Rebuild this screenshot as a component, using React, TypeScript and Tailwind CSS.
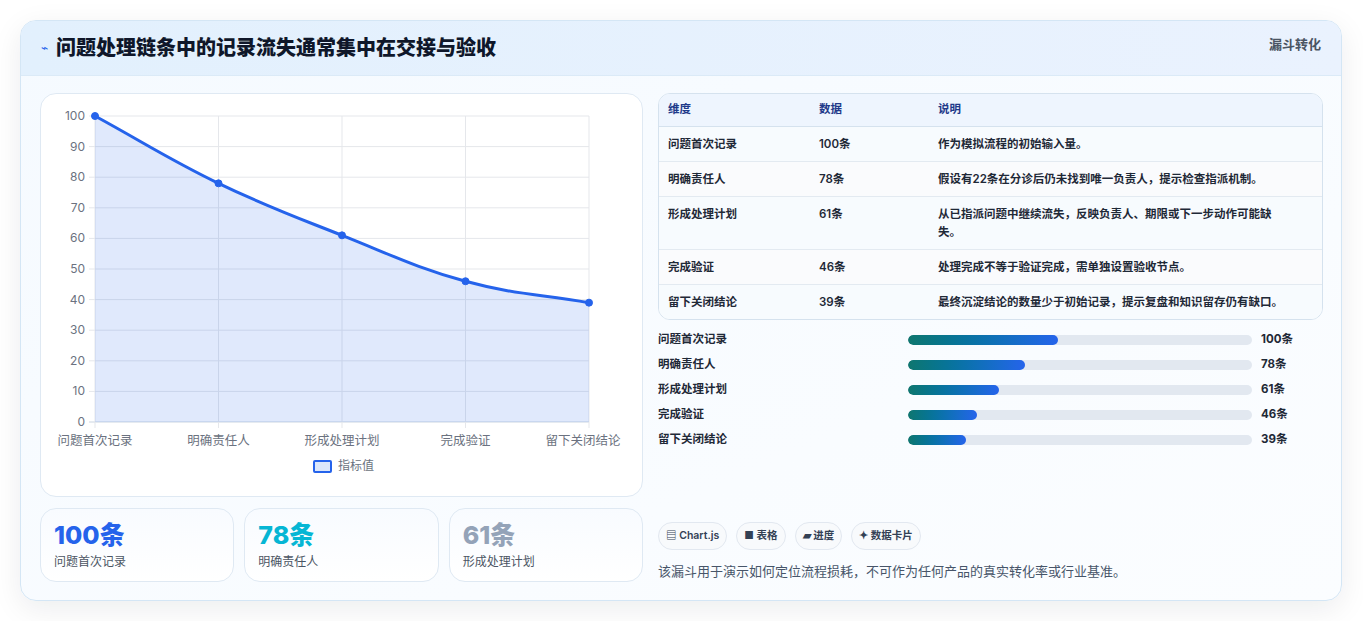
import React from 'react';

const rows = [
  { name: '问题首次记录', v: 100, desc: '作为模拟流程的初始输入量。' },
  { name: '明确责任人', v: 78, desc: '假设有22条在分诊后仍未找到唯一负责人，提示检查指派机制。' },
  { name: '形成处理计划', v: 61, desc: '从已指派问题中继续流失，反映负责人、期限或下一步动作可能缺失。' },
  { name: '完成验证', v: 46, desc: '处理完成不等于验证完成，需单独设置验收节点。' },
  { name: '留下关闭结论', v: 39, desc: '最终沉淀结论的数量少于初始记录，提示复盘和知识留存仍有缺口。' },
];

const barW: Record<number, number> = { 100: 150, 78: 117, 61: 91, 46: 69, 39: 58 };

function Chart() {
  const x0 = 54, x1 = 548, yTop = 22, yBot = 328;
  const xs = rows.map((_, i) => x0 + (i * (x1 - x0)) / 4);
  const ys = rows.map((r) => yBot - (r.v / 100) * (yBot - yTop));
  const pts = xs.map((x, i) => [x, ys[i]]);
  let d = `M${pts[0][0]},${pts[0][1]}`;
  for (let i = 1; i < pts.length; i++) {
    const [px, py] = pts[i - 1];
    const [cx, cy] = pts[i];
    const dx = (cx - px) * 0.4;
    const slopePrev = i > 1 ? (cy - pts[i - 2][1]) / 2 : cy - py;
    const slopeNext = i < pts.length - 1 ? (pts[i + 1][1] - py) / 2 : cy - py;
    d += ` C${px + dx},${py + slopePrev * 0.4} ${cx - dx},${cy - slopeNext * 0.4} ${cx},${cy}`;
  }
  const area = `${d} L${x1},${yBot} L${x0},${yBot} Z`;
  const ticks = [0, 10, 20, 30, 40, 50, 60, 70, 80, 90, 100];
  return (
    <svg width="600" height="356" className="block">
      {ticks.map((t) => {
        const y = yBot - (t / 100) * (yBot - yTop);
        return (
          <g key={t}>
            <line x1={x0 - 6} x2={x1} y1={y} y2={y} stroke={t === 0 ? '#cbd5e1' : '#e5e7eb'} />
            <text x={x0 - 10} y={y + 4} textAnchor="end" fontSize="12" fill="#6b7280">{t}</text>
          </g>
        );
      })}
      {xs.map((x, i) => (
        <g key={i}>
          <line x1={x} x2={x} y1={yTop} y2={yBot + 6} stroke="#e5e7eb" />
          <text x={i === 4 ? x - 6 : x} y={yBot + 23} textAnchor="middle" fontSize="12.5" fill="#6b7280">{rows[i].name}</text>
        </g>
      ))}
      <path d={area} fill="rgba(37,99,235,0.14)" />
      <path d={d} fill="none" stroke="#2563eb" strokeWidth="3" />
      {pts.map(([x, y], i) => (
        <circle key={i} cx={x} cy={y} r="3.5" fill="#2563eb" stroke="#2563eb" />
      ))}
    </svg>
  );
}

export default function App() {
  return (
    <div className="min-h-screen bg-white p-5 pr-[21px]" style={{ fontFamily: 'Inter, "Noto Sans CJK SC", sans-serif' }}>
      <div className="rounded-2xl border border-[#d4e6f5] bg-gradient-to-br from-[#f5faff] to-[#fbfdff] shadow-[0_8px_30px_rgba(15,23,42,0.08)] overflow-hidden">
        <div className="h-[55px] flex items-center justify-between pl-5 pr-5 bg-gradient-to-r from-[#e2f0fd] to-[#eaf2fe] border-b border-[#dbeaf7]">
          <div className="flex items-center gap-2">
            <span className="text-[#2563eb] text-xs">⌁</span>
            <span className="text-[20px] font-black text-[#0f172a]">问题处理链条中的记录流失通常集中在交接与验收</span>
          </div>
          <span className="text-[13px] font-bold text-[#4b5563] self-start mt-[14px]">漏斗转化</span>
        </div>
        <div className="flex gap-[15px] pl-[19px] pr-[18px] pt-[17px] pb-[18px]">
          <div className="w-[603px] flex flex-col gap-[11px]">
            <div className="h-[404px] rounded-2xl border border-[#dfe9f3] bg-white">
              <Chart />
              <div className="flex items-center justify-center gap-1.5 mt-[8px] ml-[4px]">
                <span className="w-[19px] h-[13px] border-2 border-[#2563eb] bg-[#dbe7fb] rounded-[2px]" />
                <span className="text-xs text-[#6b7280]">指标值</span>
              </div>
            </div>
            <div className="grid grid-cols-3 gap-[10px]">
              {[
                { v: '100条', l: '问题首次记录', c: 'text-[#2563eb]' },
                { v: '78条', l: '明确责任人', c: 'text-[#06b6d4]' },
                { v: '61条', l: '形成处理计划', c: 'text-[#94a3b8]' },
              ].map((s) => (
                <div key={s.l} className="h-[74px] rounded-2xl border border-[#dfe9f3] bg-gradient-to-b from-[#f8fbff] to-white px-[13px] pt-[11px]">
                  <div className={`text-[25px] leading-[30px] font-extrabold ${s.c}`}>{s.v}</div>
                  <div className="text-xs text-[#4b5563] mt-[4px]">{s.l}</div>
                </div>
              ))}
            </div>
          </div>
          <div className="flex-1 flex flex-col">
            <div className="rounded-xl border border-[#d5e2ee] overflow-hidden bg-white">
              <table className="w-full text-[11.5px] text-[#1f2937] font-semibold">
                <thead>
                  <tr className="bg-[#eef5fe] text-[#1e3a8a] h-[32px] border-b border-[#d5e2ee]">
                    <th className="text-left pl-[9px] w-[160px] font-semibold">维度</th>
                    <th className="text-left w-[119px] font-semibold">数据</th>
                    <th className="text-left font-semibold">说明</th>
                  </tr>
                </thead>
                <tbody>
                  {rows.map((r, i) => (
                    <tr key={r.name} className={`${i % 2 === 0 ? 'bg-[#f7fbfe]' : 'bg-[#fafbfd]'} ${i < 4 ? 'border-b border-[#e3eaf1]' : ''}`}>
                      <td className="pl-[9px] align-top py-[8px] leading-[18px]">{r.name}</td>
                      <td className="align-top py-[8px] leading-[18px]">{r.v}条</td>
                      <td className="align-top py-[8px] pr-[28px] leading-[18px]">{r.desc}</td>
                    </tr>
                  ))}
                </tbody>
              </table>
            </div>
            <div className="flex flex-col gap-[7px] mt-[11px]">
              {rows.map((r) => (
                <div key={r.name} className="flex items-center h-[18px] text-[11.5px] font-semibold text-[#1f2937]">
                  <span className="w-[250px]">{r.name}</span>
                  <div className="w-[344px] h-[10px] rounded-full bg-[#e2e8f0] overflow-hidden">
                    <div className="h-full rounded-full bg-gradient-to-r from-[#0f766e] to-[#2563eb]" style={{ width: barW[r.v] }} />
                  </div>
                  <span className="ml-[9px] font-bold">{r.v}条</span>
                </div>
              ))}
            </div>
            <div className="mt-auto">
              <div className="flex gap-[9px] text-[10.5px] font-semibold text-[#334155]">
                {['▤ Chart.js', '■ 表格', '▰ 进度', '✦ 数据卡片'].map((c) => (
                  <span key={c} className="h-[28px] px-[7px] flex items-center rounded-full border border-[#e2e8f0] bg-[#f8fafc]">{c}</span>
                ))}
              </div>
              <div className="text-[13px] text-[#475569] mt-[12px] mb-[1px]">该漏斗用于演示如何定位流程损耗，不可作为任何产品的真实转化率或行业基准。</div>
            </div>
          </div>
        </div>
      </div>
    </div>
  );
}
